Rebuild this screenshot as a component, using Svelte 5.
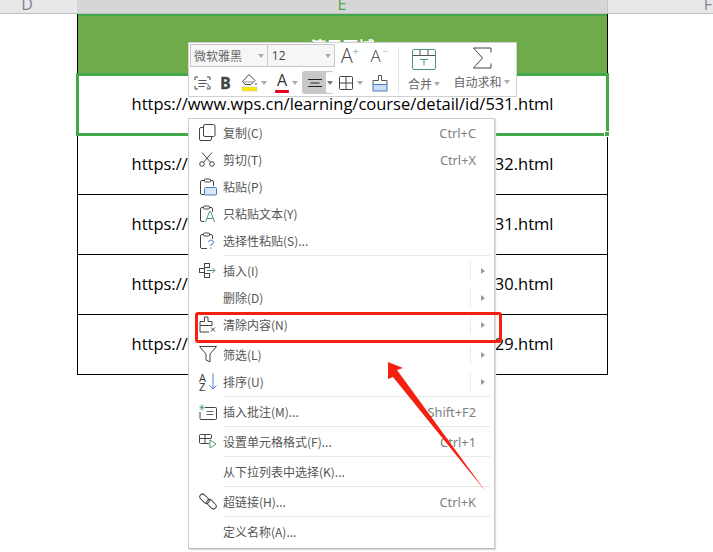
<script>
  const rows = ['531', '532', '531', '530', '529'];
  const menu = [
    { l: '复制(C)', k: 'Ctrl+C', i: 'copy' },
    { l: '剪切(T)', k: 'Ctrl+X', i: 'cut' },
    { l: '粘贴(P)', i: 'paste' },
    { l: '只粘贴文本(Y)', i: 'pastetext' },
    { l: '选择性粘贴(S)...', i: 'pastespecial', sep: true },
    { l: '插入(I)', i: 'insert', sub: true },
    { l: '删除(D)', sub: true },
    { l: '清除内容(N)', i: 'clear', sub: true, sep: true, hidesep: true },
    { l: '筛选(L)', i: 'filter', sub: true },
    { l: '排序(U)', i: 'sort', sub: true, sep: true },
    { l: '插入批注(M)...', k: 'Shift+F2', i: 'note', sep: true },
    { l: '设置单元格格式(F)...', k: 'Ctrl+1', i: 'format', sep: true },
    { l: '从下拉列表中选择(K)...', sep: true },
    { l: '超链接(H)...', k: 'Ctrl+K', i: 'link', sep: true },
    { l: '定义名称(A)...' }
  ];
</script>

<div class="page">
  <div class="colbar">
    <div class="col side">D</div>
    <div class="col cur">E</div>
    <div class="col side right"><span>F</span></div>
  </div>
  <div class="sheet">
    <div class="row head"><span>演示区域</span></div>
    {#each rows as r, i}
      <div class="row" class:sel={i === 0}>https://www.wps.cn/learning/course/detail/id/{r}.html</div>
    {/each}
  </div>

  <div class="toolbar">
    <div class="tl">
      <div class="selects">
        <div class="sel-font">微软雅黑<i class="dn"></i></div>
        <div class="sel-size">12<i class="dn"></i></div>
        <span class="fa">A<sup class="g">+</sup></span>
        <span class="fa small">A<sup class="b">−</sup></span>
      </div>
      <div class="tools">
        <svg class="t1" width="17" height="16" viewBox="0 0 17 16" fill="none" stroke="#444"><path d="M1 5V2h3M13 2h3v3M1 11v3h3M13 14h3v-3"/><path d="M4.500 5.500h8M4.500 8.500h8M4.500 11.500h6" stroke="#555"/><path d="M12.500 8.500q2.500 0 2 3l-2 1.500" stroke="#4a86d0"/></svg>
        <b class="bold">B</b>
        <svg class="t3" width="17" height="19" viewBox="0 0 17 19" fill="none"><path d="M8 1.500l6 6-4 4H4l-2.500-3z" stroke="#444"/><path d="M3 9h9" stroke="#888"/><path d="M15 10v2" stroke="#444"/><rect x="1" y="14" width="15" height="4" fill="#ffe900" stroke="#bbb" stroke-width=".5"/></svg>
        <i class="dn m"></i>
        <span class="fontc">A<em></em></span>
        <i class="dn m"></i>
        <span class="align">
          <span class="alm"><svg width="16" height="10" viewBox="0 0 16 10" stroke="#222"><path d="M1 1.500h14M3.500 5h9M1 8.500h14"/></svg></span>
          <span class="alr"><i class="dn"></i></span>
        </span>
        <svg class="t6" width="16" height="16" viewBox="0 0 16 16" fill="none" stroke="#444"><rect x="1.500" y="1.500" width="13" height="13" rx="1"/><path d="M8 1.500v13M1.500 8h13"/></svg>
        <i class="dn m"></i>
        <svg class="t7" width="18" height="18" viewBox="0 0 18 18" fill="none"><path d="M7.500 1.500h3v5h5.500v4H2v-4h5.500z" stroke="#555"/><rect x="2" y="10.500" width="14" height="6.500" fill="#cddcf2" stroke="#4a7cc0"/></svg>
      </div>
    </div>
    <div class="vdiv"></div>
    <div class="big merge">
      <svg width="24" height="21" viewBox="0 0 24 21" fill="none"><rect x=".5" y=".5" width="23" height="20" rx="1.500" stroke="#4a9a70"/><path d="M.5 6.500h23" stroke="#555"/><path d="M8 .5v6M16 .5v6" stroke="#555"/><path d="M8 10.500h8M12 10.500v6" stroke="#4a9a70"/></svg>
      <div class="cap">合并<i class="dn s"></i></div>
    </div>
    <div class="big sum">
      <svg width="20" height="22" viewBox="0 0 20 22" fill="none" stroke="#444"><path d="M19 5.500V1H1.500l9 10-9 10H19v-4.500"/></svg>
      <div class="cap">自动求和<i class="dn s"></i></div>
    </div>
  </div>

  <div class="menu">
    {#each menu as m}
      <div class="item">
        <span class="ic">
          {#if m.i === 'copy'}
            <svg width="17" height="17" viewBox="0 0 17 17" fill="none" stroke="#444"><rect x="4.500" y=".5" width="11.500" height="12" rx="1.500"/><path d="M4.500 3.500H2A1.500 1.500 0 0 0 .5 5v10A1.500 1.500 0 0 0 2 16.500h9a1.500 1.500 0 0 0 1.500-1.500v-2.500"/></svg>
          {:else if m.i === 'cut'}
            <svg width="16" height="15" viewBox="0 0 16 15" fill="none" stroke="#444"><circle cx="3" cy="12" r="2.300"/><circle cx="13" cy="12" r="2.300"/><path d="M4.500 10.300L13 .5M11.500 10.300L3 .5"/></svg>
          {:else if m.i === 'paste'}
            <svg width="18" height="18" viewBox="0 0 18 18" fill="none"><path d="M5.500 2.500H3A1.500 1.500 0 0 0 1.500 4v11A1.500 1.500 0 0 0 3 16.500h3M11 2.500h2A1.500 1.500 0 0 1 14.500 4v4" stroke="#444"/><rect x="5.500" y="1" width="6" height="3" rx="1" stroke="#444"/><rect x="5.500" y="9.500" width="12" height="7.500" rx="1" fill="#d9e5f7" stroke="#4a7cc0"/></svg>
          {:else if m.i === 'pastetext'}
            <svg width="18" height="18" viewBox="0 0 18 18" fill="none"><path d="M4.500 2.500H3A1.500 1.500 0 0 0 1.500 4v11A1.500 1.500 0 0 0 3 16.500h2M11 2.500h1A1.500 1.500 0 0 1 13.500 4v3" stroke="#444"/><rect x="4.500" y="1" width="6" height="3" rx="1" stroke="#444"/><path d="M6.500 17l4-10.500h1l4 10.500M8 13.500h6" stroke="#4a9a70"/></svg>
          {:else if m.i === 'pastespecial'}
            <svg width="18" height="18" viewBox="0 0 18 18" fill="none"><path d="M4.500 2.500H3A1.500 1.500 0 0 0 1.500 4v11A1.500 1.500 0 0 0 3 16.500h5M11 2.500h1A1.500 1.500 0 0 1 13.500 4v3" stroke="#444"/><rect x="4.500" y="1" width="6" height="3" rx="1" stroke="#444"/><path d="M9.500 10q.5-2 2.500-2t2.500 2-2.500 2.500v1.500M12 15.500v1.500" stroke="#4a7cc0"/></svg>
          {:else if m.i === 'insert'}
            <svg width="17" height="15" viewBox="0 0 17 15" fill="none"><rect x="5.500" y=".5" width="5" height="4" stroke="#444"/><rect x=".5" y="5.500" width="5" height="4" stroke="#444"/><rect x="5.500" y="10.500" width="5" height="4" stroke="#444"/><path d="M8 7.500h8M13.500 5l2.500 2.500-2.500 2.500" stroke="#4a9a70"/></svg>
          {:else if m.i === 'clear'}
            <svg width="18" height="17" viewBox="0 0 18 17" fill="none"><path d="M5.500 1h3.500v4.500h4v4H1v-4h4.500zM1 9.500v6.500h9" stroke="#444"/><path d="M12 11.500l4 4M16 11.500l-4 4" stroke="#444"/></svg>
          {:else if m.i === 'filter'}
            <svg width="18" height="17" viewBox="0 0 18 17" fill="none" stroke="#444"><path d="M.5 .5h17L11 8v8l-4-2V8z"/></svg>
          {:else if m.i === 'sort'}
            <span class="az">A<br>Z</span>
            <svg class="azd" width="8" height="17" viewBox="0 0 8 17" fill="none" stroke="#4a86d0"><path d="M4 .5v15.500M.5 12.500L4 16l3.500-3.500"/></svg>
          {:else if m.i === 'note'}
            <svg width="18" height="16" viewBox="0 0 18 16" fill="none"><path d="M6 3.500h10.500a1 1 0 0 1 1 1v10a1 1 0 0 1-1 1H2a1 1 0 0 1-1-1V8" stroke="#444"/><path d="M7.500 7.500h7M7.500 10.500h7" stroke="#666"/><path d="M3 .5v6M.5 3.500h5M1 1.500l4 4M5 1.500l-4 4" stroke="#4a9a70" stroke-width=".8"/></svg>
          {:else if m.i === 'format'}
            <svg width="18" height="15" viewBox="0 0 18 15" fill="none"><path d="M10 9.500H1.500a1 1 0 0 1-1-1V1.500a1 1 0 0 1 1-1h10a1 1 0 0 1 1 1V4M.5 4.500h12M6 .5v9" stroke="#444"/><path d="M11 6v8l6-4z" stroke="#4a9a70"/></svg>
          {:else if m.i === 'link'}
            <svg width="18" height="17" viewBox="0 0 18 17" fill="none" stroke="#444"><rect x="0" y="3" width="11" height="5.500" rx="2.750" transform="rotate(45 5.500 5.750)"/><rect x="7" y="8.500" width="11" height="5.500" rx="2.750" transform="rotate(45 12.500 11.250)"/></svg>
          {/if}
        </span>
        <span class="lb">{m.l}</span>
        {#if m.k}<span class="key">{m.k}</span>{/if}
        {#if m.sub}<span class="sub"><i></i></span>{/if}
      </div>
      {#if m.sep}<div class="sep" class:hide={m.hidesep}></div>{/if}
    {/each}
  </div>

  <div class="redbox"></div>
  <svg class="arrow" width="110" height="140" viewBox="380 355 110 140"><polygon points="388,362 403,368 397,370 486,492 393,377 388,379" fill="#f5200f"/></svg>
</div>

<style>
  :global(body) { margin: 0; background: #fff; }
  .page { position: relative; width: 713px; height: 552px; overflow: hidden; font-family: "Noto Sans CJK SC", "Noto Sans", sans-serif; }
  .colbar { display: flex; height: 13px; border-bottom: 1px solid #bdbdbd; }
  .col { font: 16px/9px "Open Sans", sans-serif; overflow: hidden; text-align: center; color: #7b8794; background: #e8e8e8; height: 13px; box-sizing: border-box; }
  .side { width: 77px; padding-right: 23px; }
  .cur { width: 531px; background: #d6d6d6; color: #4aa84a; border-right: 1px solid #c8c8c8; }
  .right { flex: 1; width: auto; padding: 0; text-align: right; }
  .right span { display: inline-block; margin-right: 1px; }
  .sheet { margin-left: 77px; width: 531px; box-sizing: border-box; border-left: 1px solid #000; border-right: 1px solid #000; }
  .row { height: 60px; box-sizing: border-box; border-bottom: 1px solid #000; padding-bottom: 2px; display: flex; align-items: center; justify-content: center; font: 16.500px "Open Sans", sans-serif; color: #000; position: relative; }
  .head { background: #6fab4a; color: #fff; border-bottom: 0; border-top: 2px solid #43a84a; font: 700 16px "Noto Sans CJK SC", sans-serif; height: 61px; padding-bottom: 0; }
  .sel::after { content: ""; position: absolute; left: -2px; right: -2px; top: -2px; bottom: -2px; border: 3px solid #43a84a; }
  .sel::before { content: ""; position: absolute; right: -3px; bottom: -3px; width: 4px; height: 4px; background: #43a84a; border: 1px solid #fff; z-index: 2; }

  .toolbar { position: absolute; left: 188px; top: 42px; width: 329px; height: 55px; box-sizing: border-box; border: 1px solid #d0d0d0; background: #fff; display: flex; padding: 1px; color: #555; font-size: 12px; }
  .tl { width: 205px; display: flex; flex-direction: column; }
  .selects { display: flex; height: 23px; align-items: center; }
  .sel-font, .sel-size { position: relative; height: 23px; box-sizing: border-box; border: 1px solid #c8c8c8; background: #f6f6f6; line-height: 21px; }
  .sel-font { width: 78px; padding-left: 3px; border-right: 0; color: #666; }
  .sel-size { width: 69px; padding-left: 4px; color: #444; font-family: "Open Sans", sans-serif; font-size: 12px; }
  .dn { display: inline-block; width: 0; height: 0; border: 3.500px solid transparent; border-top: 4px solid #aaa; border-bottom: 0; }
  .sel-font .dn, .sel-size .dn { position: absolute; right: 3px; top: 9px; }
  .fa { font: 20px/23px "Open Sans", sans-serif; font-weight: 300; color: #444; margin-left: 6px; width: 25px; position: relative; }
  .fa.small { font-size: 17px; margin-left: 5px; }
  .fa sup { position: absolute; font-size: 10px; line-height: 10px; top: 2px; left: 12px; }
  .g { color: #4a9a70; }
  .b { color: #4a86d0; }
  .tools { display: flex; align-items: center; height: 27px; margin-top: 3px; position: relative; }
  .t1 { margin-left: 4px; }
  .bold { font: 700 16px "Open Sans", sans-serif; color: #444; margin-left: 9px; width: 12px; -webkit-text-stroke: .3px #444; }
  .t3 { margin-left: 9px; }
  .m { margin-left: 3px; }
  .tools .dn { flex: none; }
  .fontc { font: 16px/16px "Open Sans", sans-serif; color: #333; margin-left: 8px; width: 14px; text-align: center; position: relative; height: 22px; }
  .fontc em { position: absolute; left: 0; right: 0; bottom: 1px; height: 3px; background: #e8001c; border-radius: 1px; }
  .align { display: flex; width: 32px; height: 23px; background: #c8c8c8; border-radius: 3px; margin-left: 4px; align-items: center; }
  .alm { width: 22px; display: flex; justify-content: center; padding-left: 2px; }
  .alr { width: 8px; height: 21px; background: #fff; border-radius: 2px; display: flex; align-items: center; justify-content: center; }
  .alr .dn { border-width: 3px; border-top-width: 4px; border-top-color: #777; border-bottom: 0; }
  .t6 { margin-left: 4px; }
  .t7 { margin-left: 8px; }
  .vdiv { width: 1px; height: 46px; margin: 3px 0 0 3px; background: #e3e3e3; }
  .big { display: flex; flex-direction: column; align-items: center; }
  .merge { width: 50px; padding-top: 5px; margin-left: 0; }
  .sum { width: 67px; margin-left: -1px; padding-top: 3px; }
  .cap { display: flex; align-items: center; color: #666; font-size: 12px; line-height: 16px; gap: 2px; margin-top: 6px; }
  .sum .cap { margin-top: 5px; }
  .dn.s { border-width: 3px; border-top-width: 4px; border-bottom: 0; }

  .menu { position: absolute; left: 188px; top: 118px; width: 307px; height: 431px; box-sizing: border-box; border: 1px solid #ccc; border-bottom-color: #bbb; background: #fff; box-shadow: 1px 1px 1px #ddd; }
  .item { display: flex; align-items: center; height: 27px; font-size: 12px; color: #555; }
  .ic { width: 34px; height: 27px; box-sizing: border-box; padding-left: 10px; display: flex; align-items: center; position: relative; flex: none; }
  .lb { flex: 1; }
  .key { margin-right: 18px; color: #808080; font: 12.800px "Noto Sans", sans-serif; }
  .sub { width: 24px; height: 18px; box-sizing: border-box; border-left: 1px solid #eaeaea; display: flex; align-items: center; justify-content: flex-end; padding-right: 9px; }
  .sub i { border: 3px solid transparent; border-left: 4px solid #999; border-right: 0; }
  .sep { height: 1px; margin: 1px 4px 1px 34px; background: #e8e8e8; }
  .sep.hide { background: transparent; }
  .az { font: 11px/9px "Open Sans", sans-serif; color: #333; width: 9px; }
  .azd { margin-left: 1px; }

  .redbox { position: absolute; left: 195px; top: 312px; width: 307px; height: 31px; box-sizing: border-box; border: 3px solid #f5200f; border-radius: 3px; }
  .arrow { position: absolute; left: 380px; top: 355px; }
</style>
